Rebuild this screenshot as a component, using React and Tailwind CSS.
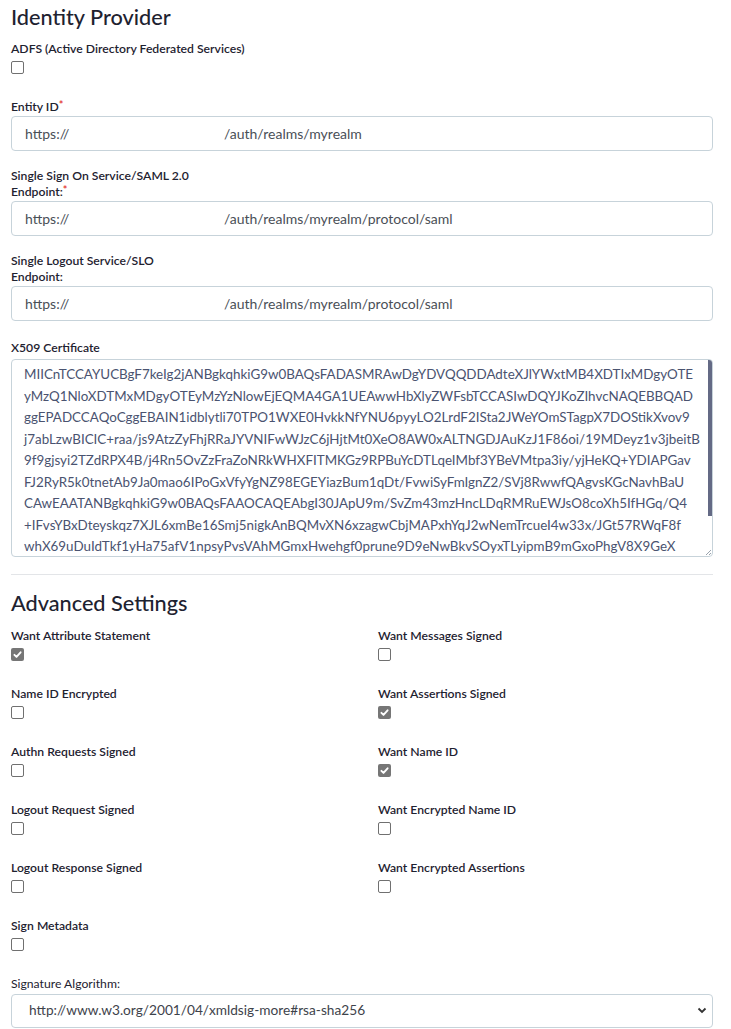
const CERT = [
  "MIICnTCCAYUCBgF7keIg2jANBgkqhkiG9w0BAQsFADASMRAwDgYDVQQDDAdteXJlYWxtMB4XDTIxMDgyOTE",
  "yMzQ1NloXDTMxMDgyOTEyMzYzNlowEjEQMA4GA1UEAwwHbXlyZWFsbTCCASIwDQYJKoZIhvcNAQEBBQAD",
  "ggEPADCCAQoCggEBAIN1idblytli70TPO1WXE0HvkkNfYNU6pyyLO2LrdF2ISta2JWeYOmSTagpX7DOStikXvov9",
  "j7abLzwBICIC+raa/js9AtzZyFhjRRaJYVNIFwWJzC6jHjtMt0XeO8AW0xALTNGDJAuKzJ1F86oi/19MDeyz1v3jbeitB",
  "9f9gjsyi2TZdRPX4B/j4Rn5OvZzFraZoNRkWHXFITMKGz9RPBuYcDTLqeIMbf3YBeVMtpa3iy/yjHeKQ+YDIAPGav",
  "FJ2RyR5k0tnetAb9Ja0mao6IPoGxVfyYgNZ98EGEYiazBum1qDt/FvwiSyFmIgnZ2/SVj8RwwfQAgvsKGcNavhBaU",
  "CAwEAATANBgkqhkiG9w0BAQsFAAOCAQEAbgI30JApU9m/SvZm43mzHncLDqRMRuEWJsO8coXh5IfHGq/Q4",
  "+IFvsYBxDteyskqz7XJL6xmBe16Smj5nigkAnBQMvXN6xzagwCbjMAPxhYqJ2wNemTrcueI4w33x/JGt57RWqF8f",
  "whX69uDuIdTkf1yHa75afV1npsyPvsVAhMGmxHwehgf0prune9D9eNwBkvSOyxTLyipmB9mGxoPhgV8X9GeX",
];

function Label({ children, req }) {
  return (
    <div className="text-[12.2px] leading-4 font-semibold text-[#1e2230]">
      {children}
      {req && <span className="text-[#e3342f] align-top text-[11px] leading-3">*</span>}
    </div>
  );
}

function Box({ checked }) {
  if (checked) {
    return (
      <span className="flex h-[13px] w-[13px] items-center justify-center rounded-[2px] bg-[#767676]">
        <svg width="11" height="11" viewBox="0 0 11 11">
          <path d="M2.4 5.8 L4.5 7.9 L8.6 3.3" fill="none" stroke="#ffffff" strokeWidth="1.9" strokeLinecap="round" strokeLinejoin="round" />
        </svg>
      </span>
    );
  }
  return <span className="block h-[13px] w-[13px] rounded-[2px] border border-[#707070] bg-white" />;
}

function CheckField({ label, checked }) {
  return (
    <div>
      <Label>{label}</Label>
      <div className="mt-[4px]">
        <Box checked={checked} />
      </div>
    </div>
  );
}

function UrlInput({ path }) {
  return (
    <div className="mt-[1.5px] flex h-[35px] items-center rounded-[4px] border border-[#c7d3da] bg-white pl-[13px] text-[14px] text-[#4a4f57]">
      <span className="inline-block w-[199px]">https://</span>
      <span>{path}</span>
    </div>
  );
}

export default function App() {
  return (
    <div className="min-h-[1029px] bg-white pl-[11px] pr-[18px] font-['Lato',sans-serif] text-[#1e2230]">
      <h3 className="pt-[3px] text-[21.7px] leading-[28px] font-medium">Identity Provider</h3>

      <div className="mt-[10px]">
        <CheckField label="ADFS (Active Directory Federated Services)" />
      </div>

      <div className="mt-[24.5px]">
        <Label req>Entity ID</Label>
        <UrlInput path="/auth/realms/myrealm" />
      </div>

      <div className="mt-[16.5px]">
        <Label req>
          Single Sign On Service/SAML 2.0
          <br />
          Endpoint:
        </Label>
        <UrlInput path="/auth/realms/myrealm/protocol/saml" />
      </div>

      <div className="mt-[16.5px]">
        <Label>
          Single Logout Service/SLO
          <br />
          Endpoint:
        </Label>
        <UrlInput path="/auth/realms/myrealm/protocol/saml" />
      </div>

      <div className="mt-[19px]">
        <Label>X509 Certificate</Label>
        <div className="relative mt-[3px] h-[198px] overflow-hidden rounded-[4px] border border-[#c7d3da] bg-white pl-[12px] pt-[4px] text-[13.4px] leading-[21.5px] text-[#4a5370]">
          {CERT.map((l, i) => (
            <div key={i} className="whitespace-nowrap">
              {l}
            </div>
          ))}
          <div className="absolute right-[-1px] top-[-1px] h-[157px] w-[5px] bg-[#646a85]" />
          <svg className="absolute bottom-0 right-0" width="7" height="7" viewBox="0 0 7 7">
            <path d="M6 1 L1 6 M6 4 L4 6" stroke="#9aa3ad" strokeWidth="1" />
          </svg>
        </div>
      </div>

      <div className="mt-[16.5px] h-px bg-[#e3e5e8]" />

      <h3 className="mt-[14.5px] text-[21.7px] leading-[28px] font-medium">Advanced Settings</h3>

      <div className="mt-[11px] grid grid-cols-[367px_1fr] gap-y-[25px]">
        <CheckField label="Want Attribute Statement" checked />
        <CheckField label="Want Messages Signed" />
        <CheckField label="Name ID Encrypted" />
        <CheckField label="Want Assertions Signed" checked />
        <CheckField label="Authn Requests Signed" />
        <CheckField label="Want Name ID" checked />
        <CheckField label="Logout Request Signed" />
        <CheckField label="Want Encrypted Name ID" />
        <CheckField label="Logout Response Signed" />
        <CheckField label="Want Encrypted Assertions" />
        <CheckField label="Sign Metadata" />
      </div>

      <div className="mt-[25px]">
        <div className="text-[12.2px] leading-4 font-normal text-[#1e2230]">Signature Algorithm:</div>
        <div className="mt-[1.5px] flex h-[34px] items-center justify-between rounded-[4px] border border-[#c7d3da] bg-white pl-[17px] pr-[5px] text-[13.7px] text-[#3e434b]">
          <span>http://www.w3.org/2001/04/xmldsig-more#rsa-sha256</span>
          <svg width="10" height="7" viewBox="0 0 10 7">
            <path d="M1.5 1.5 L5 5 L8.5 1.5" fill="none" stroke="#333333" strokeWidth="1.8" />
          </svg>
        </div>
      </div>
    </div>
  );
}
